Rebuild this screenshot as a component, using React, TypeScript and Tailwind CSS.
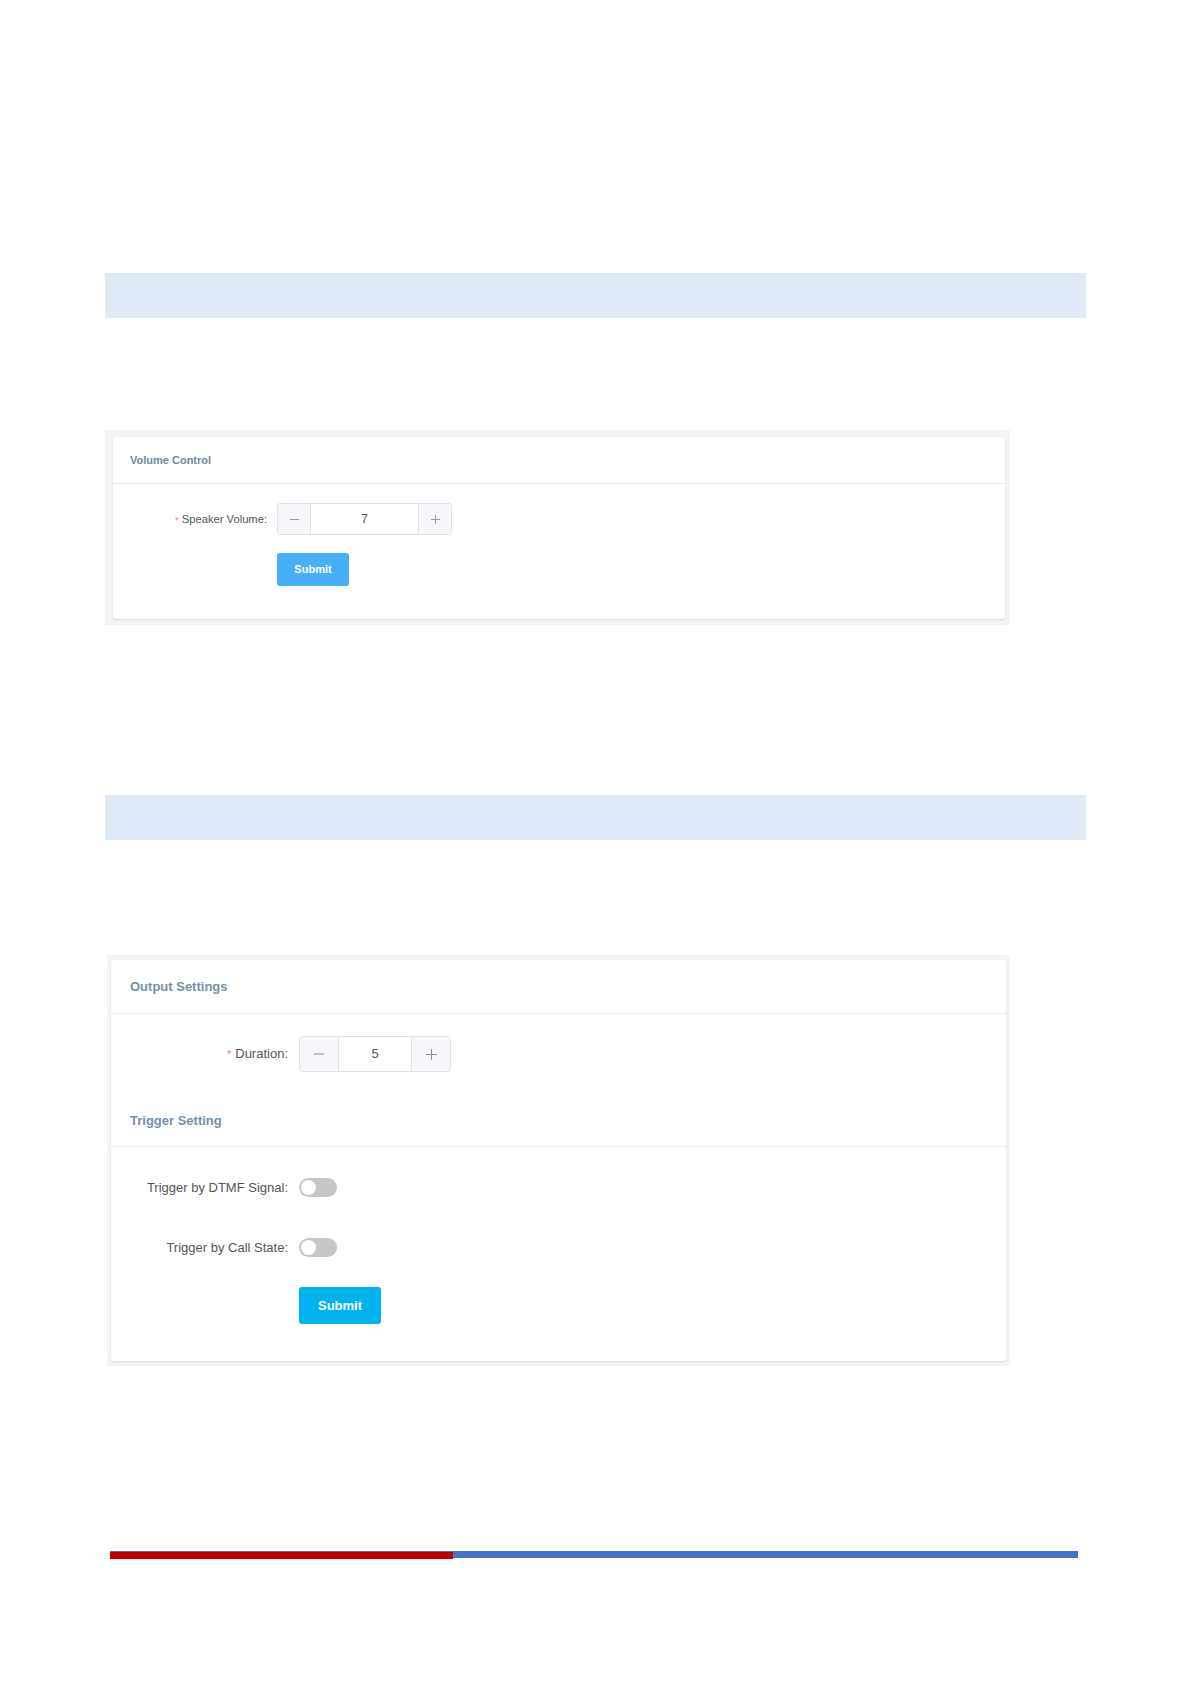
import React from 'react'

const FONT = { fontFamily: '"Liberation Sans", Arial, Helvetica, sans-serif' }

function Minus({ size }: { size: number }) {
  return (
    <svg width={size} height={size} viewBox="0 0 10 10">
      <line x1="0" y1="5" x2="10" y2="5" stroke="#8d9096" strokeWidth="1" />
    </svg>
  )
}

function Plus({ size }: { size: number }) {
  return (
    <svg width={size} height={size} viewBox="0 0 10 10">
      <line x1="0" y1="5" x2="10" y2="5" stroke="#8d9096" strokeWidth="1" />
      <line x1="5" y1="0" x2="5" y2="10" stroke="#8d9096" strokeWidth="1" />
    </svg>
  )
}

function Toggle() {
  return (
    <div className="flex h-[19px] w-[38px] items-center rounded-full bg-[#c6c7c5] pl-[2px]">
      <div className="h-[15px] w-[15px] rounded-full bg-white" />
    </div>
  )
}

function Band() {
  return <div className="ml-[105px] h-[45px] w-[981px] bg-[#dfeaf6]" />
}

export default function App() {
  return (
    <div className="min-h-[1685px] w-[1191px] bg-white pt-[273px] pb-[125px]" style={FONT}>
      <Band />

      {/* volume control */}
      <div className="mt-[112px] ml-[105px] w-[905px] bg-[#f4f4f4] pt-[7px] pr-[5px] pb-[6px] pl-[8px]">
        <div className="rounded-[3px] bg-white shadow-[0_1px_2px_rgba(0,0,0,0.12)]">
          <div className="flex h-[47px] items-center border-b border-[#e8ebf1] pl-[17px]">
            <span className="text-[11px] font-bold text-[#6e88a6]">Volume Control</span>
          </div>
          <div className="pt-[19px] pb-[33px]">
            <div className="flex items-center">
              <div className="w-[164px] pr-[10px] text-right text-[11.2px] text-[#555]">
                <span className="mr-[3px] text-[9px] text-[#f56c6c]">*</span>
                Speaker Volume:
              </div>
              <div className="flex h-[32px] w-[175px] overflow-hidden rounded-[3px] border border-[#dfe2e8]">
                <div className="flex w-[33px] items-center justify-center border-r border-[#dfe2e8] bg-[#f5f7fa]">
                  <Minus size={9} />
                </div>
                <div className="flex flex-1 items-center justify-center text-[12px] text-[#555]">7</div>
                <div className="flex w-[33px] items-center justify-center border-l border-[#dfe2e8] bg-[#f5f7fa]">
                  <Plus size={9} />
                </div>
              </div>
            </div>
            <div className="mt-[18px] pl-[164px]">
              <button className="h-[33px] w-[72px] rounded-[3px] bg-[#47aff5] text-[11px] font-bold text-white">
                Submit
              </button>
            </div>
          </div>
        </div>
      </div>

      <div className="mt-[170px]">
        <Band />
      </div>

      {/* output settings */}
      <div className="mt-[115px] ml-[107px] w-[903px] bg-[#f4f4f4] pt-[5px] pr-[4px] pb-[5px] pl-[4px]">
        <div className="rounded-[3px] bg-white shadow-[0_1px_2px_rgba(0,0,0,0.12)]">
          <div className="flex h-[54px] items-center border-b border-[#e8ebf1] pl-[19px]">
            <span className="text-[13px] font-bold text-[#7590ad]">Output Settings</span>
          </div>
          <div className="flex items-center pt-[22px]">
            <div className="w-[188px] pr-[11px] text-right text-[13px] text-[#555]">
              <span className="mr-[4px] text-[11px] text-[#f56c6c]">*</span>
              Duration:
            </div>
            <div className="flex h-[36px] w-[152px] overflow-hidden rounded-[3px] border border-[#dfe2e8]">
              <div className="flex w-[39px] items-center justify-center border-r border-[#dfe2e8] bg-[#f5f7fa]">
                <Minus size={10} />
              </div>
              <div className="flex flex-1 items-center justify-center text-[13px] text-[#555]">5</div>
              <div className="flex w-[39px] items-center justify-center border-l border-[#dfe2e8] bg-[#f5f7fa]">
                <Plus size={11} />
              </div>
            </div>
          </div>
          <div className="mt-[24px] flex h-[51px] items-center border-b border-[#e8ebf1] pl-[19px]">
            <span className="text-[13px] font-bold text-[#7590ad]">Trigger Setting</span>
          </div>
          <div className="pt-[31px] pb-[37px]">
            <div className="flex items-center">
              <div className="w-[188px] pr-[11px] text-right text-[13px] text-[#555]">Trigger by DTMF Signal:</div>
              <Toggle />
            </div>
            <div className="mt-[40px] flex items-center">
              <div className="w-[188px] pr-[11px] text-right text-[13px] text-[#555]">Trigger by Call State:</div>
              <Toggle />
            </div>
            <div className="mt-[30px] pl-[188px]">
              <button className="h-[37px] w-[82px] rounded-[3px] bg-[#00b2f0] text-[13px] font-bold text-white">
                Submit
              </button>
            </div>
          </div>
        </div>
      </div>

      {/* footer bar */}
      <div className="mt-[185px] ml-[110px] flex w-[968px] items-start">
        <div className="w-[343px] border-t border-[#4472c4]">
          <div className="h-[7px] bg-[#c00000]" />
        </div>
        <div className="h-[7px] flex-1 bg-[#4472c4]" />
      </div>
    </div>
  )
}
